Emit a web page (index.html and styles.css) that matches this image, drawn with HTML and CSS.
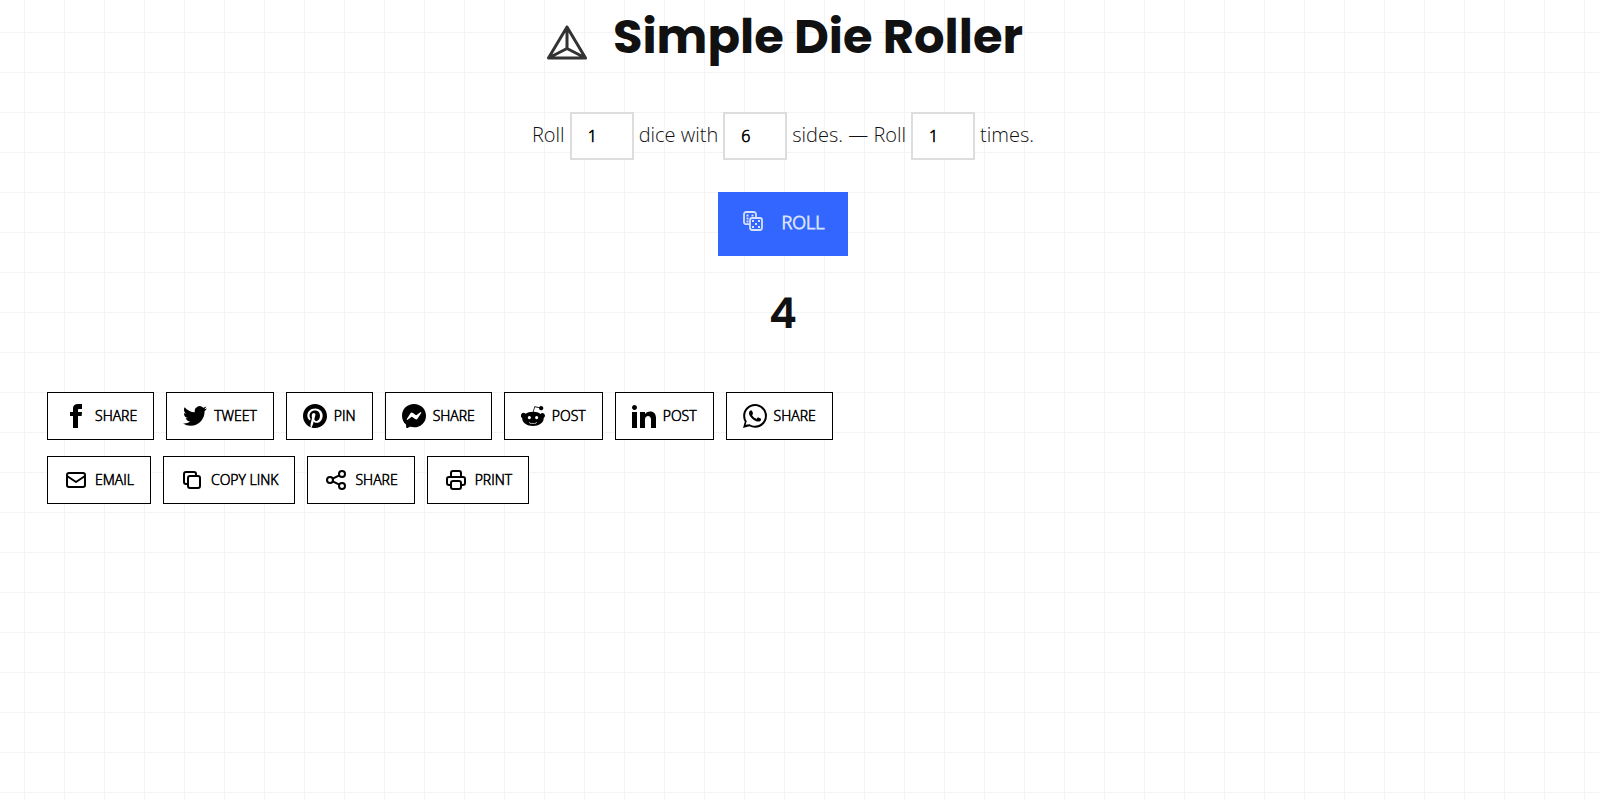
FILE: index.html
```html
<!DOCTYPE html>
<html lang="en">
<head>
<meta charset="utf-8">
<meta name="viewport" content="width=device-width, initial-scale=1">
<title>Simple Die Roller</title>
<link rel="stylesheet" href="styles.css">
</head>
<body>
<main class="page">
  <header class="title">
    <svg class="title-logo" viewBox="0 0 48 48" aria-hidden="true">
      <path class="logo-back" d="M24 8 42.500 39H5.500z"/>
      <path class="logo-lines" d="M24 8 42.500 39H5.500zM24 8v21.500M5.500 39 24 29.500 42.500 39"/>
    </svg>
    <h1 class="title-text">Simple Die Roller</h1>
  </header>

  <form class="roller" onsubmit="return false">
    <div class="options">
      <label for="dice">Roll</label>
      <input class="number" id="dice" type="text" inputmode="numeric" value="1">
      <label for="sides">dice with</label>
      <input class="number" id="sides" type="text" inputmode="numeric" value="6">
      <label for="times">sides. — Roll</label>
      <input class="number" id="times" type="text" inputmode="numeric" value="1">
      <span>times.</span>
    </div>
    <button class="roll" type="submit">
      <svg class="icon" viewBox="0 0 24 24" aria-hidden="true">
        <g fill="none" stroke="currentColor" stroke-width="1.8"><path d="M8 14.2H4.200A2.200 2.200 0 0 1 2 12V4.200A2.200 2.200 0 0 1 4.200 2h7.600A2.200 2.200 0 0 1 14 4.200V8"/><rect x="8" y="8" width="12" height="12" rx="2.200"/></g>
        <path fill="currentColor" d="M4.500 4.500h2v2h-2zM9.500 4.500h2v2h-2zM4.500 7.500h2v2h-2zM4.500 10.500h2v2h-2zM10 10h2v2h-2zM16 10h2v2h-2zM13 13h2v2h-2zM10 16h2v2h-2zM16 16h2v2h-2z"/>
      </svg>
      <span>ROLL</span>
    </button>
    <output class="result" for="dice sides times">4</output>
  </form>

  <nav class="share" aria-label="Share">
    <a class="share-link" href="#facebook"><svg class="icon" viewBox="0 0 24 24" aria-hidden="true"><path d="M9 8H6v4h3v12h5V12h3.642L18 8h-4V6.333C14 5.378 14.192 5 15.115 5H18V0h-3.808C10.596 0 9 1.583 9 4.615z"/></svg>SHARE</a>
    <a class="share-link" href="#twitter"><svg class="icon" viewBox="0 0 24 24" aria-hidden="true"><path d="M24 4.557a9.83 9.83 0 0 1-2.828.775 4.932 4.932 0 0 0 2.165-2.724 9.864 9.864 0 0 1-3.127 1.195 4.916 4.916 0 0 0-8.384 4.482C7.691 8.094 4.066 6.13 1.64 3.161a4.822 4.822 0 0 0-.666 2.475c0 1.71.87 3.213 2.188 4.096a4.904 4.904 0 0 1-2.228-.616v.061a4.923 4.923 0 0 0 3.946 4.827 4.996 4.996 0 0 1-2.212.085 4.937 4.937 0 0 0 4.604 3.417 9.868 9.868 0 0 1-6.102 2.105c-.39 0-.779-.023-1.17-.067a13.995 13.995 0 0 0 7.557 2.209c9.054 0 13.999-7.496 13.999-13.986 0-.209 0-.42-.015-.63a9.936 9.936 0 0 0 2.46-2.548z"/></svg>TWEET</a>
    <a class="share-link" href="#pinterest"><svg class="icon" viewBox="0 0 24 24" aria-hidden="true"><path d="M12 0C5.373 0 0 5.372 0 12c0 5.084 3.163 9.426 7.627 11.174-.105-.949-.2-2.405.042-3.441.218-.937 1.407-5.965 1.407-5.965s-.359-.719-.359-1.782c0-1.668.967-2.914 2.171-2.914 1.023 0 1.518.769 1.518 1.69 0 1.029-.655 2.568-.994 3.995-.283 1.194.599 2.169 1.777 2.169 2.133 0 3.772-2.249 3.772-5.495 0-2.873-2.064-4.882-5.012-4.882-3.414 0-5.418 2.561-5.418 5.207 0 1.031.397 2.138.893 2.738a.36.36 0 0 1 .083.345l-.333 1.36c-.053.22-.174.267-.402.161-1.499-.698-2.436-2.889-2.436-4.649 0-3.785 2.75-7.262 7.929-7.262 4.163 0 7.398 2.967 7.398 6.931 0 4.136-2.607 7.464-6.227 7.464-1.216 0-2.359-.631-2.75-1.378l-.748 2.853c-.271 1.043-1.002 2.35-1.492 3.146C9.57 23.812 10.763 24 12 24c6.627 0 12-5.373 12-12S18.627 0 12 0z"/></svg>PIN</a>
    <a class="share-link" href="#messenger"><svg class="icon" viewBox="0 0 24 24" aria-hidden="true"><path fill-rule="evenodd" d="M12 0C5.24 0 0 4.952 0 11.64c0 3.499 1.434 6.521 3.769 8.61.195.175.315.42.319.683l.066 2.135a.96.96 0 0 0 1.347.85l2.381-1.053a.96.96 0 0 1 .641-.046A13 13 0 0 0 12 23.28c6.76 0 12-4.952 12-11.64S18.76 0 12 0zM19.2 8.957c.34-.538-.318-1.142-.826-.76l-3.789 2.874a.72.72 0 0 1-.867 0L10.914 8.97a1.8 1.8 0 0 0-2.6.48L4.788 15.04c-.339.536.321 1.141.829.756l3.788-2.874a.72.72 0 0 1 .867 0l2.804 2.102a1.8 1.8 0 0 0 2.603-.48z"/></svg>SHARE</a>
    <a class="share-link" href="#reddit"><svg class="icon" viewBox="0 0 24 24" aria-hidden="true"><path d="M24 11.779a2.654 2.654 0 0 0-4.497-1.899c-1.81-1.191-4.259-1.949-6.971-2.046l1.483-4.669 4.016.941-.006.058a2.17 2.17 0 1 0 .174-.841l-4.329-1.015a.37.37 0 0 0-.44.249L11.774 7.82c-2.838.034-5.409.798-7.3 2.025a2.643 2.643 0 1 0-3.236 4.102C.822 18.346 5.753 21.92 11.948 21.92s11.126-3.574 10.716-7.973A2.65 2.65 0 0 0 24 11.779zM6.776 13.595a1.57 1.57 0 1 1 3.14 0 1.57 1.57 0 0 1-3.14 0zm9.061 5.223c-.802.802-2.059 1.192-3.843 1.192s-3.04-.39-3.842-1.191a.37.37 0 0 1 .52-.524c.656.655 1.743.974 3.322.974s2.667-.319 3.323-.974a.37.37 0 0 1 .52.523zm-.189-3.653a1.568 1.568 0 1 1 0-3.136 1.568 1.568 0 0 1 0 3.136z"/></svg>POST</a>
    <a class="share-link" href="#linkedin"><svg class="icon" viewBox="0 0 24 24" aria-hidden="true"><path d="M4.98 3.5c0 1.381-1.11 2.5-2.48 2.5S.02 4.881.02 3.5C.02 2.12 1.13 1 2.5 1s2.48 1.12 2.48 2.5zM5 8H0v16h5zm7.982 0H8.014v16h4.969v-8.399c0-4.67 6.029-5.052 6.029 0V24H24V13.869c0-7.88-8.922-7.593-11.018-3.714z"/></svg>POST</a>
    <a class="share-link" href="#whatsapp"><svg class="icon" viewBox="0 0 24 24" aria-hidden="true"><path d="M.057 24l1.687-6.163a11.867 11.867 0 0 1-1.587-5.946C.16 5.335 5.495 0 12.05 0a11.817 11.817 0 0 1 8.413 3.488 11.824 11.824 0 0 1 3.48 8.414c-.003 6.557-5.338 11.892-11.893 11.892a11.9 11.9 0 0 1-5.688-1.448zm6.597-3.807c1.676.995 3.276 1.591 5.392 1.592 5.448 0 9.886-4.434 9.889-9.885.002-5.462-4.415-9.89-9.881-9.892-5.452 0-9.887 4.434-9.889 9.884a9.82 9.82 0 0 0 1.51 5.26l-.999 3.648zm11.387-5.464c-.074-.124-.272-.198-.57-.347-.297-.149-1.758-.868-2.031-.967-.272-.099-.47-.149-.669.149-.198.297-.768.967-.941 1.165-.173.198-.347.223-.644.074-.297-.149-1.255-.462-2.39-1.475-.883-.788-1.48-1.761-1.653-2.059-.173-.297-.018-.458.13-.606.134-.133.297-.347.446-.521.151-.172.2-.296.3-.495.099-.198.05-.372-.025-.521-.075-.148-.669-1.611-.916-2.206-.242-.579-.487-.501-.669-.51l-.57-.01c-.198 0-.52.074-.792.372s-1.04 1.016-1.04 2.479 1.065 2.876 1.213 3.074c.149.198 2.095 3.2 5.076 4.487.709.306 1.263.489 1.694.626.712.226 1.36.194 1.872.118.571-.085 1.758-.719 2.006-1.413.248-.695.248-1.29.173-1.414z"/></svg>SHARE</a>
    <a class="share-link" href="#email"><svg class="icon icon-line" viewBox="0 0 24 24" aria-hidden="true"><rect x="3" y="5" width="18" height="14" rx="2"/><path d="m3 8 9 6 9-6"/></svg>EMAIL</a>
    <a class="share-link" href="#copy"><svg class="icon icon-line" viewBox="0 0 24 24" aria-hidden="true"><rect x="8" y="8" width="12" height="12" rx="2"/><path d="M16 8V6a2 2 0 0 0-2-2H6a2 2 0 0 0-2 2v8a2 2 0 0 0 2 2h2"/></svg>COPY LINK</a>
    <a class="share-link" href="#share"><svg class="icon icon-line" viewBox="0 0 24 24" aria-hidden="true"><circle cx="6" cy="12" r="3"/><circle cx="18" cy="6" r="3"/><circle cx="18" cy="18" r="3"/><path d="m8.700 10.700 6.600-3.400M8.700 13.300l6.600 3.400"/></svg>SHARE</a>
    <a class="share-link" href="#print"><svg class="icon icon-line" viewBox="0 0 24 24" aria-hidden="true"><path d="M17 17h2a2 2 0 0 0 2-2v-4a2 2 0 0 0-2-2H5a2 2 0 0 0-2 2v4a2 2 0 0 0 2 2h2M17 9V5a2 2 0 0 0-2-2H9a2 2 0 0 0-2 2v4"/><rect x="7" y="13" width="10" height="8" rx="2"/></svg>PRINT</a>
  </nav>
</main>
</body>
</html>
```
FILE: styles.css
```css
* {
  box-sizing: border-box;
}

body {
  margin: 0;
  color: #111;
  font: 300 20px/32px "Open Sans", sans-serif;
  background-color: #fff;
  background-image:
    linear-gradient(to right, #f4f4f4 1px, transparent 1px),
    linear-gradient(to bottom, #f4f4f4 1px, transparent 1px);
  background-size: 40px 40px;
  background-position: 24px 32px;
}

.page {
  padding: 0 81px 48px 47px;
}

.title {
  display: flex;
  justify-content: center;
  align-items: center;
  gap: 22px;
  padding-top: 5px;
}

.title-logo {
  width: 48px;
  height: 48px;
  margin-top: 12px;
}

.logo-back {
  fill: #fff;
  stroke: #fff;
  stroke-width: 6;
}

.logo-lines {
  fill: none;
  stroke: #333;
  stroke-width: 3;
  stroke-linecap: round;
  stroke-linejoin: round;
}

.title-text {
  margin: 0;
  font: 700 48px/64px Poppins, Inter, sans-serif;
}

.roller {
  display: flex;
  flex-direction: column;
  align-items: center;
  gap: 32px;
  padding-top: 43px;
}

.options {
  display: flex;
  flex-wrap: wrap;
  justify-content: center;
  gap: 5px;
  line-height: 46px;
}

.number {
  width: 64px;
  height: 48px;
  padding: 0 16px;
  border: 2px solid #ddd;
  background: #fff;
  color: #000;
  font: 300 16px/24px "Open Sans", sans-serif;
  -webkit-text-stroke: 0.04em;
}

.roll {
  display: flex;
  align-items: center;
  gap: 16px;
  height: 64px;
  padding: 0 24px 4px;
  border: 0;
  background: #36f;
  color: #d6e0ff;
  font: 300 18px/24px "Open Sans", sans-serif;
  -webkit-text-stroke: 0.05em;
}

.result {
  font: 600 42px/52px Poppins, Inter, sans-serif;
}

.icon {
  flex: none;
  width: 24px;
  height: 24px;
  fill: currentColor;
}

.icon-line {
  fill: none;
  stroke: currentColor;
  stroke-width: 2;
  stroke-linejoin: round;
}

.share {
  display: flex;
  flex-wrap: wrap;
  gap: 16px 12px;
  max-width: 800px;
  padding-top: 52px;
}

.share-link {
  display: flex;
  align-items: center;
  gap: 7px;
  height: 48px;
  padding: 0 16px;
  border: 1px solid #000;
  background: #fff;
  color: #000;
  font: 300 14px/24px "Open Sans", sans-serif;
  -webkit-text-stroke: 0.04em;
  text-decoration: none;
}
```
